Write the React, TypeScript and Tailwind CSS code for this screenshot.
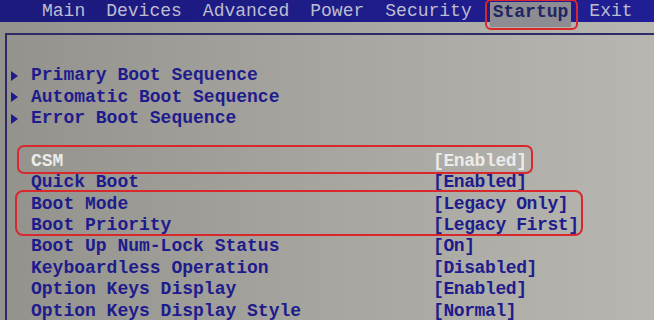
import { FC, ReactNode } from "react";

const menu = ["Main", "Devices", "Advanced", "Power", "Security", "Startup", "Exit"];

interface RowProps {
  label: string;
  value?: string;
  arrow?: boolean;
  selected?: boolean;
}

const Arrow: FC = () => (
  <svg width="7" height="10" viewBox="0 0 7 10" className="absolute left-[4px] top-[6px]">
    <polygon points="0,0 7,5 0,10" fill="#1e1c8c" />
  </svg>
);

const Row: FC<RowProps> = ({ label, value, arrow, selected }) => (
  <div
    className={`relative flex h-[21.4px] items-center pl-[24px] ${
      selected ? "text-[#ecebe8]" : "text-[#1e1c8c]"
    }`}
  >
    {arrow && <Arrow />}
    <span className="w-[402px] shrink-0 whitespace-pre">{label}</span>
    {value && <span className="whitespace-pre tracking-[-0.4px]">{value}</span>}
  </div>
);

// red annotation box drawn over a group of rows
const Marked: FC<{ className: string; children: ReactNode }> = ({ className, children }) => (
  <div className="relative">
    {children}
    <span className={`pointer-events-none absolute border-2 border-[#d8282c] ${className}`} />
  </div>
);

export default function App() {
  return (
    <div className="h-[320px] w-[654px] overflow-hidden bg-linear-to-r from-[#93928d] via-[#a6a5a0] to-[#b7b6b1] font-['Liberation_Mono',monospace] text-[18px] font-bold">
      <div className="flex h-[22px] gap-[21px] bg-linear-to-r from-[#1c1a7c] to-[#201e94] pl-[42px] font-normal leading-[22px] text-[#bdbdd0]">
        {menu.map((m) =>
          m === "Startup" ? (
            <span key={m} className="relative -mx-[3px] mt-[2px] h-[25px] bg-[#8c8c92] px-[3px] font-bold leading-[20px] text-[#202563]">
              {m}
              <span className="absolute -left-[5px] -right-[7px] -top-[3px] h-[31px] rounded-[6px] border-2 border-[#d8282c]" />
            </span>
          ) : (
            <span key={m}>{m}</span>
          )
        )}
      </div>
      <div className="h-[11px]" />
      <div className="ml-[5px] h-full border-l-2 border-t-2 border-[#2c2b66] pt-[30px]">
        <Row label="Primary Boot Sequence" arrow />
        <Row label="Automatic Boot Sequence" arrow />
        <Row label="Error Boot Sequence" arrow />
        <div className="h-[21.4px]" />
        <Marked className="-top-[6px] -bottom-[2px] left-[10px] w-[516px] rounded-[7px]">
          <Row label="CSM" value="[Enabled]" selected />
        </Marked>
        <Row label="Quick Boot" value="[Enabled]" />
        <Marked className="-top-[3px] bottom-0 left-[8px] w-[568px] rounded-[8px]">
          <Row label="Boot Mode" value="[Legacy Only]" />
          <Row label="Boot Priority" value="[Legacy First]" />
        </Marked>
        <Row label="Boot Up Num-Lock Status" value="[On]" />
        <Row label="Keyboardless Operation" value="[Disabled]" />
        <Row label="Option Keys Display" value="[Enabled]" />
        <Row label="Option Keys Display Style" value="[Normal]" />
      </div>
    </div>
  );
}
